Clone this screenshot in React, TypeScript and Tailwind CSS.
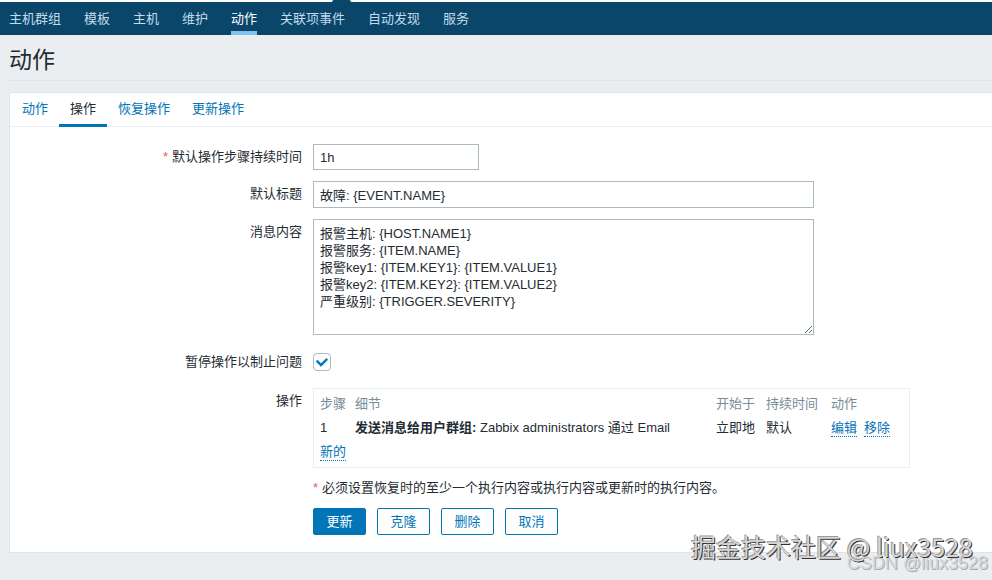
import { useState } from "react";
import type { ReactNode } from "react";

const navItems = ["主机群组", "模板", "主机", "维护", "动作", "关联项事件", "自动发现", "服务"];
const tabs = ["动作", "操作", "恢复操作", "更新操作"];

const defaultMessage = [
  "报警主机: {HOST.NAME1}",
  "报警服务: {ITEM.NAME}",
  "报警key1: {ITEM.KEY1}: {ITEM.VALUE1}",
  "报警key2: {ITEM.KEY2}: {ITEM.VALUE2}",
  "严重级别: {TRIGGER.SEVERITY}",
].join("\n");

const operations = [
  {
    step: 1,
    type: "发送消息给用户群组:",
    target: "Zabbix administrators 通过 Email",
    start: "立即地",
    duration: "默认",
  },
];

const fieldClass =
  "block w-full border border-[#acbbc2] bg-white px-[6px] text-[#1f2c33] outline-none focus:border-[#0275b8]";

function FormRow({ label, htmlFor, required, center, children }: {
  label?: string;
  htmlFor?: string;
  required?: boolean;
  center?: boolean;
  children: ReactNode;
}) {
  return (
    <div className={`flex gap-[11px] ${center ? "items-center" : "items-start"}`}>
      <div className="w-[292px] shrink-0 text-right leading-[26px]">
        {label && (
          <label htmlFor={htmlFor}>
            {required && <span className="mr-1 text-[#e45959]">*</span>}
            {label}
          </label>
        )}
      </div>
      <div className="min-w-0 flex-1">{children}</div>
    </div>
  );
}

function ActionLink({ children }: { children: ReactNode }) {
  return (
    <a href="#" className="inline-block border-b border-dotted border-[#0275b8] leading-4 text-[#0275b8]">
      {children}
    </a>
  );
}

export default function App() {
  const [activeTab, setActiveTab] = useState("操作");
  const [paused, setPaused] = useState(true);

  return (
    <div className="relative min-h-screen overflow-hidden bg-[#ebeef0] font-['Liberation_Sans','Noto_Sans_CJK_SC',sans-serif] text-[13px] text-[#1f2c33]">
      {/* Top navigation */}
      <div className="h-[2px] bg-white">
        <div className="ml-[332px] h-full w-[19px] rounded-t-sm bg-[#0a466a]" />
      </div>
      <nav className="flex h-[33px] gap-[23px] bg-[#0a466a] px-[9px]">
        {navItems.map((item) => (
          <a
            key={item}
            href="#"
            className={`border-b-4 leading-[34px] whitespace-nowrap ${
              item === "动作" ? "border-[#7fc1f0] text-white" : "border-transparent text-[#c2dbe9]"
            }`}
          >
            {item}
          </a>
        ))}
      </nav>

      <header className="ml-[9px] border-b border-[#dfe4e7] pt-[9px] pb-[3px]">
        <h1 className="text-[23px] leading-[33px]">动作</h1>
      </header>

      <main className="mt-[11px] ml-[9px] border-y border-l border-[#dfe4e7] bg-white">
        <div role="tablist" className="flex h-[34px] border-b border-[#ebeef0] pl-px">
          {tabs.map((tab) => (
            <button
              key={tab}
              type="button"
              role="tab"
              aria-selected={tab === activeTab}
              onClick={() => setActiveTab(tab)}
              className={`h-[34px] border-b-3 px-[11px] ${
                tab === activeTab ? "border-[#0275b8] text-[#1f2c33]" : "border-transparent text-[#0275b8]"
              }`}
            >
              {tab}
            </button>
          ))}
        </div>

        <form className="flex flex-col gap-[11px] py-[17px] pr-4" onSubmit={(e) => e.preventDefault()}>
          <FormRow label="默认操作步骤持续时间" htmlFor="esc_period" required>
            <input id="esc_period" type="text" defaultValue="1h" className={`${fieldClass} h-[26px] max-w-[166px]`} />
          </FormRow>

          <FormRow label="默认标题" htmlFor="subject">
            <input
              id="subject"
              type="text"
              defaultValue="故障: {EVENT.NAME}"
              className={`${fieldClass} h-[27px] max-w-[501px]`}
            />
          </FormRow>

          <FormRow label="消息内容" htmlFor="message">
            <textarea
              id="message"
              defaultValue={defaultMessage}
              className={`${fieldClass} h-[116px] max-w-[501px] resize py-[5px] leading-[17px]`}
            />
          </FormRow>

          <FormRow label="暂停操作以制止问题" htmlFor="pause" center>
            <div className="flex h-[31px] items-center">
              <span className="relative block h-[18px] w-[18px]">
                <input
                  id="pause"
                  type="checkbox"
                  checked={paused}
                  onChange={(e) => setPaused(e.target.checked)}
                  className="block h-full w-full appearance-none rounded-sm border border-[#acbbc2] bg-white"
                />
                {paused && (
                  <svg viewBox="0 0 18 18" className="pointer-events-none absolute inset-0" fill="none">
                    <path d="M3.6 7.6 L8 12 L14.2 5.8" stroke="#0275b8" strokeWidth="2.4" />
                  </svg>
                )}
              </span>
            </div>
          </FormRow>

          <FormRow label="操作">
            <div className="max-w-[597px] border border-[#ebeef0] px-[6px] py-[3px]">
              <table className="w-full table-fixed text-left">
                <thead>
                  <tr className="h-6 text-[#768d99]">
                    <th className="w-[35px] font-normal">步骤</th>
                    <th className="font-normal">细节</th>
                    <th className="w-[50px] font-normal">开始于</th>
                    <th className="w-[65px] font-normal">持续时间</th>
                    <th className="w-[72px] font-normal">动作</th>
                  </tr>
                </thead>
                <tbody>
                  {operations.map((op) => (
                    <tr key={op.step} className="h-6">
                      <td>{op.step}</td>
                      <td>
                        <b>{op.type}</b> {op.target}
                      </td>
                      <td>{op.start}</td>
                      <td>{op.duration}</td>
                      <td>
                        <div className="flex gap-[7px]">
                          <ActionLink>编辑</ActionLink>
                          <ActionLink>移除</ActionLink>
                        </div>
                      </td>
                    </tr>
                  ))}
                  <tr className="h-6">
                    <td colSpan={5}>
                      <ActionLink>新的</ActionLink>
                    </td>
                  </tr>
                </tbody>
              </table>
            </div>
          </FormRow>

          <FormRow>
            <p className="leading-[18px]">
              <span className="mr-1 text-[#e45959]">*</span>
              必须设置恢复时的至少一个执行内容或执行内容或更新时的执行内容。
            </p>
            <div className="mt-[11px] flex gap-[11px]">
              <button type="submit" className="h-[27px] w-[53px] rounded-xs border border-[#0275b8] bg-[#0275b8] text-white">
                更新
              </button>
              {["克隆", "删除", "取消"].map((name) => (
                <button
                  key={name}
                  type="button"
                  className="h-[27px] w-[53px] rounded-xs border border-[#0275b8] bg-white text-[#0275b8]"
                >
                  {name}
                </button>
              ))}
            </div>
          </FormRow>
        </form>
      </main>

      {/* Watermarks */}
      <div className="pointer-events-none absolute right-[4px] bottom-[5px] font-['Liberation_Sans',sans-serif] text-[18px] leading-6 text-[#d3d5d7] [text-shadow:1px_1px_0_#a9acaf]">
        CSDN @liux3528
      </div>
      <div className="pointer-events-none absolute right-[19px] bottom-[16px] font-['Noto_Sans_CJK_SC',sans-serif] text-[25px] leading-9 text-[#d6d6d6] [text-shadow:1px_1px_0_#333,-1px_-1px_0_#999]">
        掘金技术社区 @ liux3528
      </div>
    </div>
  );
}
